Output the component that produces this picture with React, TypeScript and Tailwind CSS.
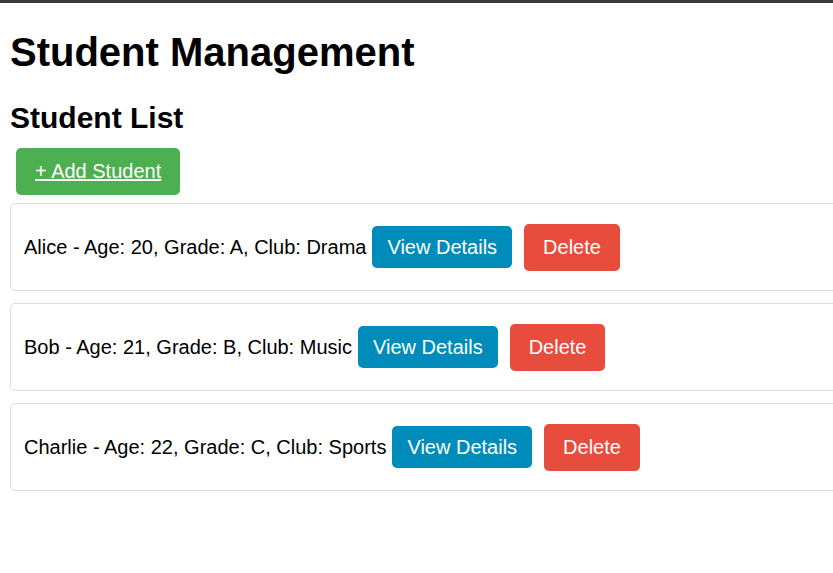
const STUDENTS = [
  { id: 1, name: 'Alice', age: 20, grade: 'A', club: 'Drama' },
  { id: 2, name: 'Bob', age: 21, grade: 'B', club: 'Music' },
  { id: 3, name: 'Charlie', age: 22, grade: 'C', club: 'Sports' },
]

export default function App() {
  return (
    <div className="min-h-screen w-full overflow-hidden bg-white text-black font-['Liberation_Sans',Arial,sans-serif]">
      <div className="h-[3px] bg-[#3d3a3c]" />
      <div className="w-[1000px] pl-[10px]">
        <h1 className="mt-[26px] text-[40px] font-bold leading-[46px]">Student Management</h1>
        <h2 className="mt-[26px] text-[30px] font-bold leading-[34px]">Student List</h2>

        <button className="mt-[13px] ml-[6px] h-[47px] rounded-[5px] bg-[#4caf50] px-[19px] text-[20px] leading-[23px] text-white underline">
          + Add Student
        </button>

        <div className="mt-[8px] flex flex-col gap-[12px]">
          {STUDENTS.map(s => (
            <div
              key={s.id}
              className="flex h-[88px] items-center rounded-[5px] border border-[#dddddd] pl-[13px] text-[20px] leading-[23px]"
            >
              <span>
                {s.name} - Age: {s.age}, Grade: {s.grade}, Club: {s.club}
              </span>
              <button className="ml-[6px] h-[42px] rounded-[5px] bg-[#008cba] px-[15px] text-white">
                View Details
              </button>
              <button className="ml-[12px] h-[47px] rounded-[5px] bg-[#e74c3c] px-[19px] text-white">
                Delete
              </button>
            </div>
          ))}
        </div>
      </div>
    </div>
  )
}
